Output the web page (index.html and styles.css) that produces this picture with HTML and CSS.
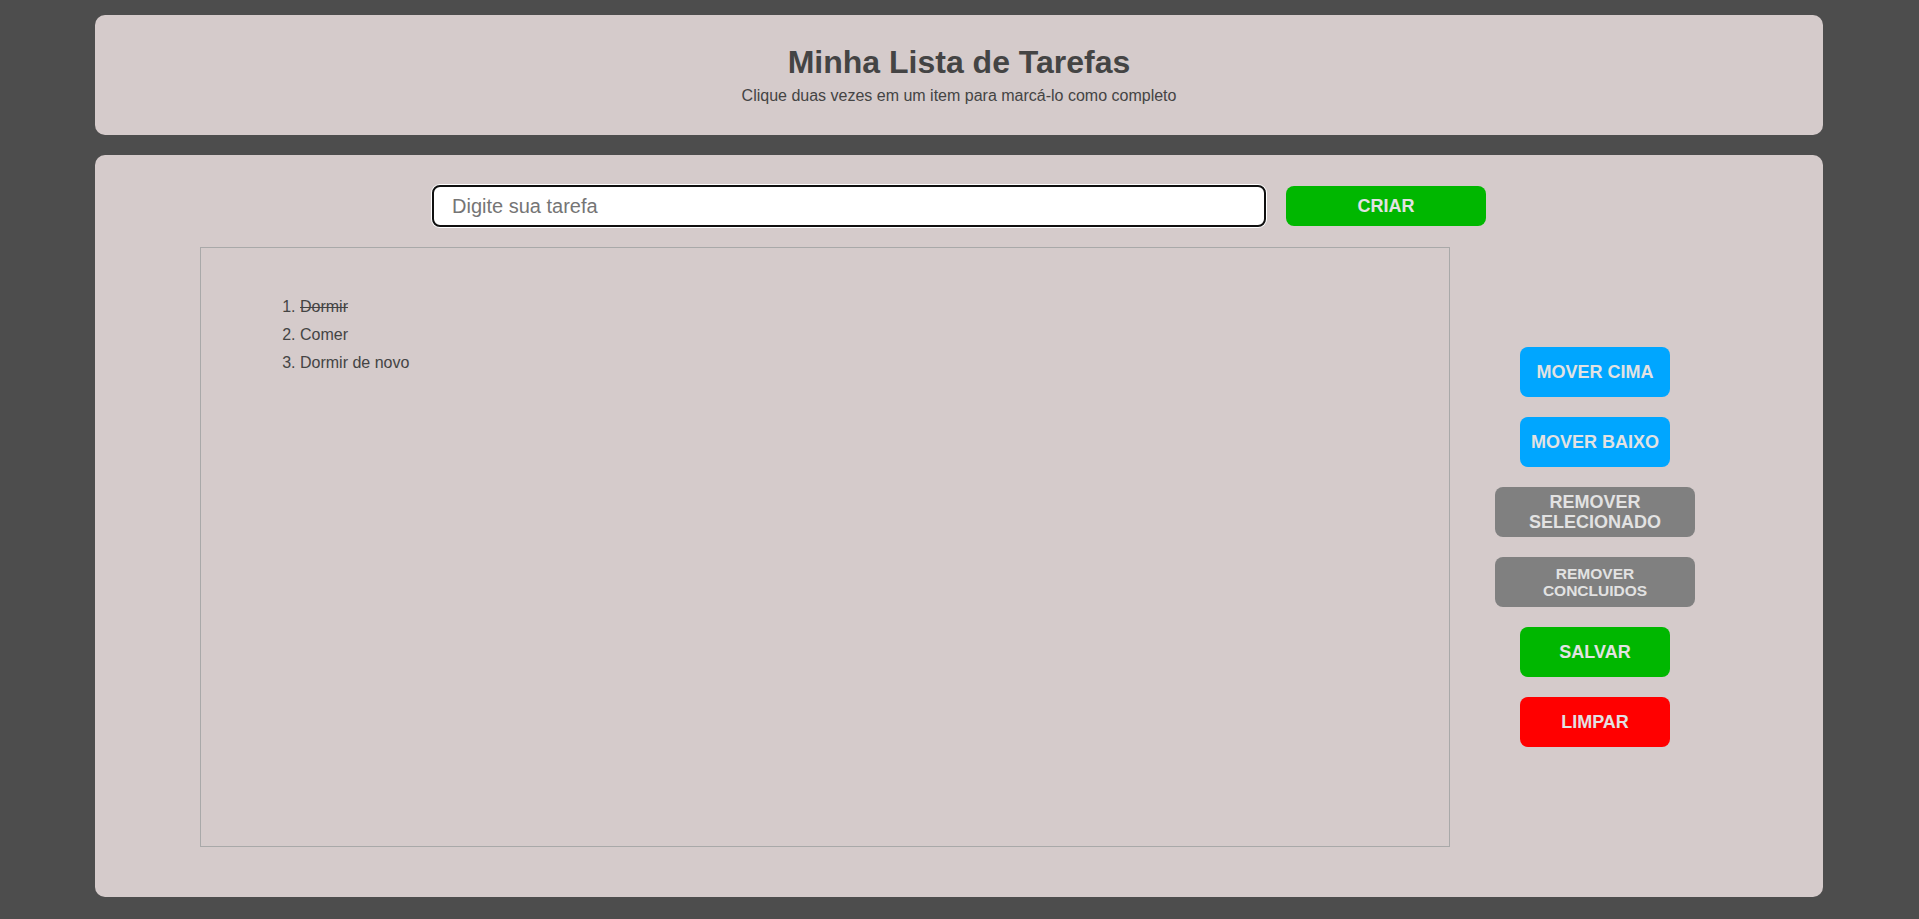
FILE: index.html
```html
<!DOCTYPE html>
<html lang="pt-BR">
<head>
<meta charset="utf-8">
<title>Minha Lista de Tarefas</title>
<link rel="stylesheet" href="styles.css">
</head>
<body>
  <header class="card header">
    <h1 class="title">Minha Lista de Tarefas</h1>
    <p class="subtitle">Clique duas vezes em um item para marcá-lo como completo</p>
  </header>
  <main class="card content">
    <div class="input-row">
      <input class="task-input" type="text" placeholder="Digite sua tarefa">
      <button class="btn btn-create">CRIAR</button>
    </div>
    <div class="main-row">
      <div class="list-box">
        <ol class="task-list">
          <li class="done">Dormir</li>
          <li>Comer</li>
          <li>Dormir de novo</li>
        </ol>
      </div>
      <div class="actions">
        <button class="btn btn-blue btn-sm">MOVER CIMA</button>
        <button class="btn btn-blue btn-sm">MOVER BAIXO</button>
        <button class="btn btn-grey btn-wide">REMOVER SELECIONADO</button>
        <button class="btn btn-grey btn-wide btn-small-text">REMOVER CONCLUIDOS</button>
        <button class="btn btn-green btn-sm">SALVAR</button>
        <button class="btn btn-red btn-sm">LIMPAR</button>
      </div>
    </div>
  </main>
</body>
</html>
```
FILE: styles.css
```css
html, body {
  margin: 0;
  padding: 0;
}
body {
  background: #4d4d4d;
  font-family: "Liberation Sans", Arial, sans-serif;
  color: #444;
  padding: 15px 1px 0 0;
}
.card {
  width: 1728px;
  margin: 0 auto;
  background: #d5cbcb;
  border-radius: 10px;
  box-sizing: border-box;
}
.header {
  padding: 29px 0 30px;
  text-align: center;
}
.title {
  margin: 0 0 6px;
  font-size: 32px;
  font-weight: bold;
  color: #444;
}
.subtitle {
  margin: 0;
  font-size: 16px;
  color: #444;
}
.content {
  margin-top: 20px;
  padding: 30px 0 50px;
}
.input-row {
  display: flex;
  justify-content: center;
  align-items: center;
  gap: 20px;
}
.task-input {
  width: 834px;
  height: 42px;
  box-sizing: border-box;
  border: 2px solid #101010;
  border-radius: 8px;
  box-shadow: 0 0 0 1px #ffffff;
  background: #fff;
  padding: 0 18px;
  font-family: "Liberation Sans", Arial, sans-serif;
  font-size: 20px;
  color: #333;
  outline: none;
}
.task-input::placeholder {
  color: #757575;
}
.btn {
  border: none;
  border-radius: 8px;
  font-family: "Liberation Sans", Arial, sans-serif;
  font-weight: bold;
  font-size: 18px;
  color: #e2e2e2;
  cursor: pointer;
  padding: 0;
}
.btn-create {
  width: 200px;
  height: 40px;
  background: #00b700;
}
.main-row {
  display: flex;
  align-items: center;
  margin-top: 20px;
  padding-left: 105px;
}
.list-box {
  width: 1250px;
  height: 600px;
  box-sizing: border-box;
  border: 1px solid #a9a9a9;
  padding: 45px 40px 0 59px;
  flex: none;
}
.task-list {
  margin: 0;
  padding-left: 40px;
  font-size: 16px;
  line-height: 28px;
  color: #444;
}
.task-list .done {
  text-decoration: line-through;
}
.actions {
  width: 290px;
  display: flex;
  flex-direction: column;
  align-items: center;
  gap: 20px;
}
.btn-sm {
  width: 150px;
  height: 50px;
}
.btn-wide {
  width: 200px;
  height: 50px;
  line-height: 20px;
  padding: 0 24px;
}
.btn-small-text {
  font-size: 15.5px;
  line-height: 17px;
}
.btn-blue { background: #00a6ff; }
.btn-grey { background: #808080; }
.btn-green { background: #00b700; }
.btn-red { background: #ff0000; }
```
